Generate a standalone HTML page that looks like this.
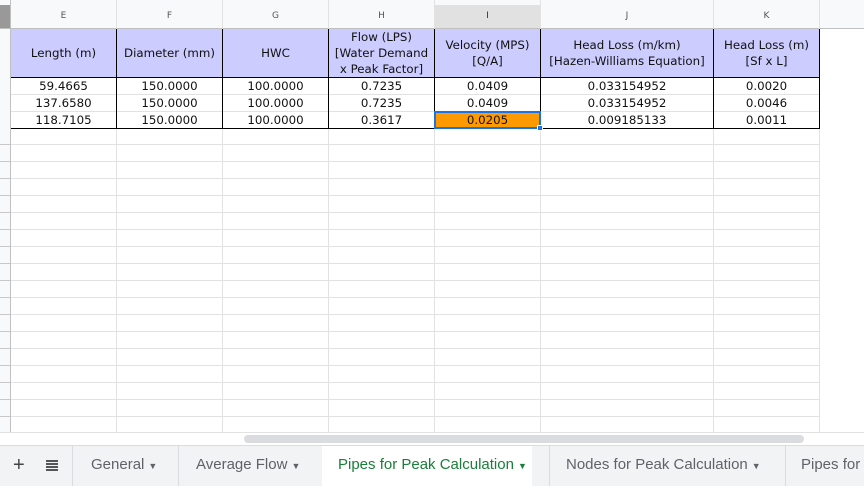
<!DOCTYPE html>
<html><head><style>
*{margin:0;padding:0;box-sizing:border-box}
body{width:864px;height:486px;overflow:hidden;background:#fff;font-family:"DejaVu Sans","Liberation Sans",sans-serif;position:relative}
.a{position:absolute}
.vl{position:absolute;top:0;width:1px;height:445px;background:#e2e2e2}
.ch{position:absolute;top:5px;height:23px;font-size:9px;color:#555;text-align:center;line-height:23px;background:#f8f9fa}
.c{position:absolute;font-size:11.8px;color:#111;text-align:center;display:flex;align-items:center;justify-content:center;line-height:16px;white-space:nowrap}
.tab{position:absolute;top:446px;height:40px;line-height:38px;font-family:"Liberation Sans",sans-serif;font-size:15px;color:#5f6368;white-space:nowrap}
.tab span{font-size:9px;margin-left:4px}
</style></head><body>
<div class="a" style="left:0;top:0;width:864px;height:5px;background:#f8f9fa"></div>
<div class="a" style="left:0;top:0;width:11px;height:445px;background:#f8f9fa"></div>
<div class="a" style="left:0;top:5px;width:864px;height:23px;background:#f8f9fa"></div>
<div class="a" style="left:0;top:5px;width:10px;height:24px;background:#999"></div>
<div class="a" style="left:0;top:28px;width:864px;height:1px;background:#c0c0c0"></div>
<div class="a" style="left:11px;top:128px;width:809px;height:305px;background:repeating-linear-gradient(to bottom,transparent 0,transparent 16px,#e2e2e2 16px,#e2e2e2 17px)"></div>
<div class="a" style="left:0;top:128px;width:11px;height:305px;background:repeating-linear-gradient(to bottom,transparent 0,transparent 16px,#c8c8c8 16px,#c8c8c8 17px)"></div>
<div class="a" style="left:10px;top:0;width:1px;height:445px;background:#c0c0c0"></div>
<div class="vl" style="left:116px"></div><div class="vl" style="left:222px"></div><div class="vl" style="left:328px"></div><div class="vl" style="left:434px"></div><div class="vl" style="left:540px"></div><div class="vl" style="left:713px"></div><div class="vl" style="left:819px"></div>
<div class="ch" style="left:11px;width:105px">E</div>
<div class="ch" style="left:117px;width:105px">F</div>
<div class="ch" style="left:223px;width:105px">G</div>
<div class="ch" style="left:329px;width:105px">H</div>
<div class="ch" style="left:435px;width:105px;background:#e1e1e1;color:#333">I</div>
<div class="ch" style="left:541px;width:172px">J</div>
<div class="ch" style="left:714px;width:105px">K</div>
<div class="a" style="left:11px;top:29px;width:809px;height:48px;background:#ccccff"></div>
<div class="a" style="left:11px;top:77px;width:809px;height:52px;background:#fff"></div>
<div class="a" style="left:11px;top:94px;width:809px;height:1px;background:#e2e2e2"></div>
<div class="a" style="left:11px;top:111px;width:809px;height:1px;background:#e2e2e2"></div>
<div class="a" style="left:11px;top:77px;width:809px;height:1px;background:#000"></div>
<div class="a" style="left:11px;top:128px;width:809px;height:1px;background:#000"></div>
<div class="a" style="left:116px;top:29px;width:1px;height:100px;background:#000"></div>
<div class="a" style="left:222px;top:29px;width:1px;height:100px;background:#000"></div>
<div class="a" style="left:328px;top:29px;width:1px;height:100px;background:#000"></div>
<div class="a" style="left:434px;top:29px;width:1px;height:100px;background:#000"></div>
<div class="a" style="left:540px;top:29px;width:1px;height:100px;background:#000"></div>
<div class="a" style="left:713px;top:29px;width:1px;height:100px;background:#000"></div>
<div class="a" style="left:819px;top:29px;width:1px;height:100px;background:#000"></div>
<div class="c" style="left:11px;top:29px;width:105px;height:48px">Length (m)</div>
<div class="c" style="left:117px;top:29px;width:105px;height:48px">Diameter (mm)</div>
<div class="c" style="left:223px;top:29px;width:105px;height:48px">HWC</div>
<div class="c" style="left:329px;top:29px;width:105px;height:48px">Flow (LPS)<br>[Water Demand<br>x Peak Factor]</div>
<div class="c" style="left:435px;top:29px;width:105px;height:48px">Velocity (MPS)<br>[Q/A]</div>
<div class="c" style="left:541px;top:29px;width:172px;height:48px">Head Loss (m/km)<br>[Hazen-Williams Equation]</div>
<div class="c" style="left:714px;top:29px;width:105px;height:48px">Head Loss (m)<br>[Sf x L]</div>
<div class="a" style="left:434px;top:111px;width:107px;height:18px;background:#ff9900;border:2px solid #1a73e8"></div>
<div class="a" style="left:537px;top:125px;width:6px;height:6px;background:#1a73e8;border:1px solid #fff"></div>
<div class="c" style="left:11px;top:78px;width:105px;height:16px">59.4665</div>
<div class="c" style="left:117px;top:78px;width:105px;height:16px">150.0000</div>
<div class="c" style="left:223px;top:78px;width:105px;height:16px">100.0000</div>
<div class="c" style="left:329px;top:78px;width:105px;height:16px">0.7235</div>
<div class="c" style="left:435px;top:78px;width:105px;height:16px">0.0409</div>
<div class="c" style="left:541px;top:78px;width:172px;height:16px">0.033154952</div>
<div class="c" style="left:714px;top:78px;width:105px;height:16px">0.0020</div>
<div class="c" style="left:11px;top:95px;width:105px;height:16px">137.6580</div>
<div class="c" style="left:117px;top:95px;width:105px;height:16px">150.0000</div>
<div class="c" style="left:223px;top:95px;width:105px;height:16px">100.0000</div>
<div class="c" style="left:329px;top:95px;width:105px;height:16px">0.7235</div>
<div class="c" style="left:435px;top:95px;width:105px;height:16px">0.0409</div>
<div class="c" style="left:541px;top:95px;width:172px;height:16px">0.033154952</div>
<div class="c" style="left:714px;top:95px;width:105px;height:16px">0.0046</div>
<div class="c" style="left:11px;top:112px;width:105px;height:16px">118.7105</div>
<div class="c" style="left:117px;top:112px;width:105px;height:16px">150.0000</div>
<div class="c" style="left:223px;top:112px;width:105px;height:16px">100.0000</div>
<div class="c" style="left:329px;top:112px;width:105px;height:16px">0.3617</div>
<div class="c" style="left:435px;top:112px;width:105px;height:16px">0.0205</div>
<div class="c" style="left:541px;top:112px;width:172px;height:16px">0.009185133</div>
<div class="c" style="left:714px;top:112px;width:105px;height:16px">0.0011</div>
<div class="a" style="left:0;top:432px;width:864px;height:14px;background:#fff;border-top:1px solid #e2e2e2"></div>
<div class="a" style="left:244px;top:435px;width:560px;height:8px;background:#dadce0;border-radius:4px"></div>
<div class="a" style="left:0;top:445px;width:864px;height:41px;background:#f1f3f4;border-top:1px solid #dadce0"></div>
<div class="tab" style="left:13px;font-size:20px;color:#444">+</div>
<div class="a" style="left:46px;top:460px;width:12px;height:11px;background:repeating-linear-gradient(to bottom,#555 0,#555 2px,transparent 2px,transparent 3px)"></div>
<div class="a" style="left:72px;top:446px;width:1px;height:40px;background:#dadce0"></div>
<div class="tab" style="left:91px">General<span>▼</span></div>
<div class="a" style="left:178px;top:446px;width:1px;height:40px;background:#dadce0"></div>
<div class="tab" style="left:196px">Average Flow<span>▼</span></div>
<div class="a" style="left:322px;top:446px;width:210px;height:40px;background:#fff"></div>
<div class="tab" style="left:338px;color:#188038">Pipes for Peak Calculation<span>▼</span></div>
<div class="a" style="left:549px;top:446px;width:1px;height:40px;background:#dadce0"></div>
<div class="tab" style="left:566px">Nodes for Peak Calculation<span>▼</span></div>
<div class="a" style="left:785px;top:446px;width:1px;height:40px;background:#dadce0"></div>
<div class="tab" style="left:801px">Pipes for</div>
</body></html>
